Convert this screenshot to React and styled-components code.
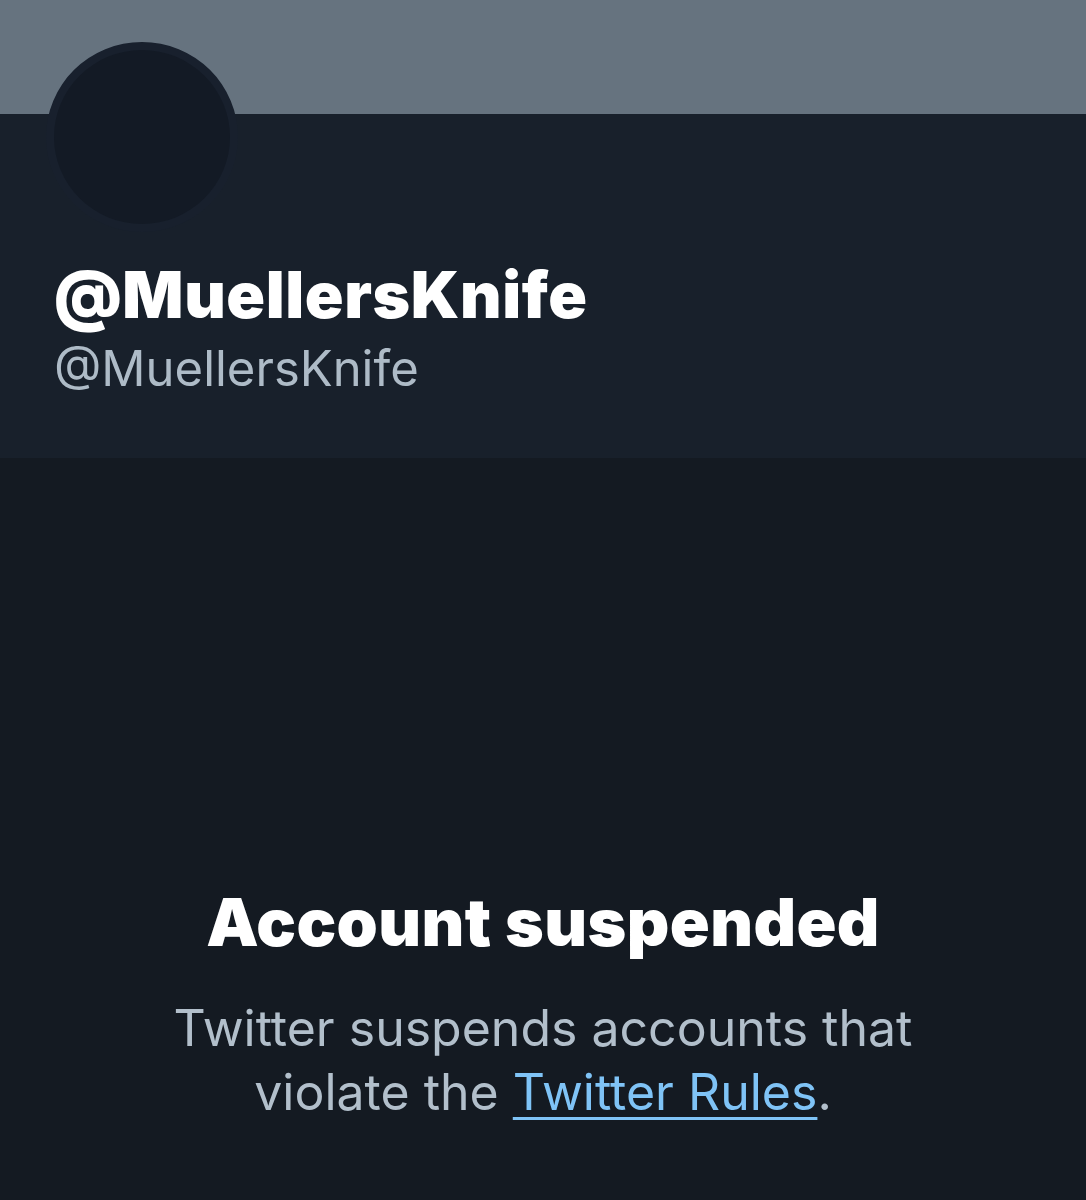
import React from "react";
import styled, { createGlobalStyle } from "styled-components";

const GlobalStyle = createGlobalStyle`
  html, body {
    margin: 0;
    padding: 0;
    background: #141a22;
  }
  body {
    font-family: Inter, "Noto Sans", sans-serif;
  }
`;

const Page = styled.div`
  width: 1086px;
  height: 1200px;
  overflow: hidden;
  background: #141a22;
  display: flex;
  flex-direction: column;
`;

const Banner = styled.div`
  height: 114px;
  background: #66737f;
  flex-shrink: 0;
`;

const Header = styled.div`
  height: 344px;
  flex-shrink: 0;
  background: #18202b;
  padding: 0 54px;
  box-sizing: border-box;
  display: flex;
  flex-direction: column;
`;

const Avatar = styled.div`
  width: 192px;
  height: 190px;
  margin-top: -72px;
  margin-left: -8px;
  border-radius: 50%;
  background: #131a25;
  border: 8px solid #18202d;
  box-sizing: border-box;
`;

const Name = styled.h1`
  margin: 27px 0 0;
  font-size: 64px;
  line-height: 72px;
  font-weight: 900;
  color: #ffffff;
  letter-spacing: 0.6px;
  white-space: nowrap;
`;

const Handle = styled.div`
  margin-top: 8px;
  font-size: 49px;
  line-height: 60px;
  font-weight: 400;
  color: #aebbc7;
  white-space: nowrap;
`;

const Body = styled.div`
  flex: 1;
  display: flex;
  flex-direction: column;
  align-items: center;
  padding-top: 426px;
`;

const Title = styled.h2`
  margin: 0;
  font-size: 66px;
  line-height: 76px;
  font-weight: 900;
  color: #ffffff;
  letter-spacing: 0.4px;
  white-space: nowrap;
`;

const Message = styled.p`
  margin: 36px 0 0;
  font-size: 50px;
  line-height: 64px;
  color: #b2bfcb;
  text-align: center;
  width: 820px;
`;

const RulesLink = styled.a`
  color: #7fc3f6;
  text-decoration: underline;
  text-decoration-thickness: 3px;
  text-underline-offset: 7px;
`;

export default function App() {
  return (
    <>
      <GlobalStyle />
      <Page>
        <Banner />
        <Header>
          <Avatar />
          <Name>@MuellersKnife</Name>
          <Handle>@MuellersKnife</Handle>
        </Header>
        <Body>
          <Title>Account suspended</Title>
          <Message>
            Twitter suspends accounts that violate the{" "}
            <RulesLink href="#">Twitter Rules</RulesLink>.
          </Message>
        </Body>
      </Page>
    </>
  );
}
